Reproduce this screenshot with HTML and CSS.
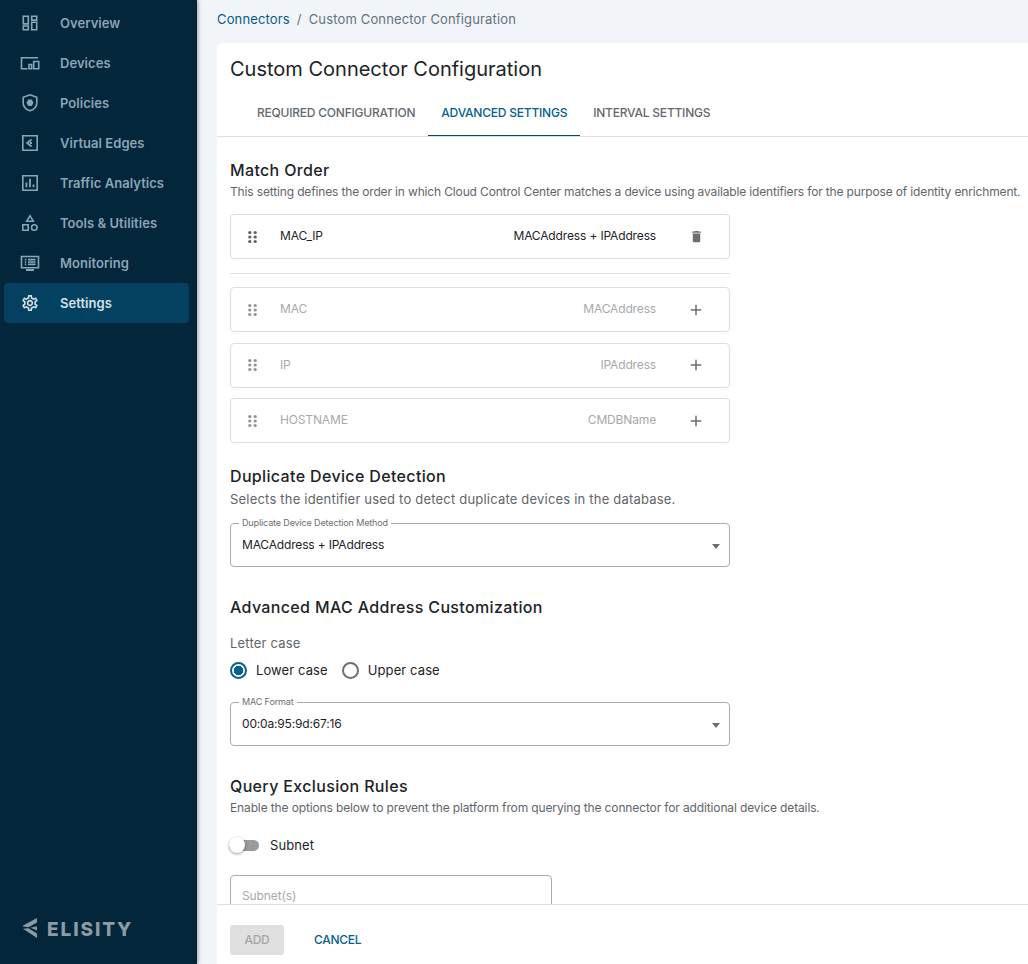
FILE: index.html
```html
<!DOCTYPE html>
<html lang="en">
<head>
  <meta charset="UTF-8">
  <title>Custom Connector Configuration</title>
  <link rel="stylesheet" href="styles.css">
</head>
<body>
  <div class="app">
    <aside class="sidebar">
      <nav class="nav">
        <a class="nav-item"><svg class="nav-icon" viewBox="0 0 22 22"><path d="M4.300 4.300h5v7.600h-5zM12.700 4.300h5v3.800h-5zM12.700 10.200h5v7.500h-5zM4.300 14h5v3.700h-5z"/></svg>Overview</a>
        <a class="nav-item"><svg class="nav-icon" viewBox="0 0 22 22"><path d="M19 5.800H2.500V16.800H8.500M14.700 9.500h5v7.300h-5zM10 12.500h2.600v4.300H10z"/></svg>Devices</a>
        <a class="nav-item"><svg class="nav-icon" viewBox="0 0 22 22"><path d="M11 2.800l6.800 2.400v6c0 3.500-2.600 6.200-6.800 7.600-4.200-1.400-6.800-4.100-6.800-7.600v-6z"/><path class="icon-solid" d="M9.300 7.500h3.400l1.800 3.200-1.800 3.200H9.300l-1.800-3.200z"/></svg>Policies</a>
        <a class="nav-item"><svg class="nav-icon" viewBox="0 0 22 22"><path d="M3.800 3.800h14.400v14.400H3.800z"/><path d="M12.500 7.500L8.200 11l4.300 3.500M13 11h-2" stroke-width="1.800"/></svg>Virtual Edges</a>
        <a class="nav-item"><svg class="nav-icon" viewBox="0 0 22 22"><path d="M3.800 3.800h14.400v14.400H3.800z"/><path d="M7.500 10.500v4.800M11 6.800v8.500M14.500 12.500v2.800" stroke-width="1.800"/></svg>Traffic Analytics</a>
        <a class="nav-item"><svg class="nav-icon" viewBox="0 0 22 22"><path d="M11 3.800l3.300 5.400H7.700zM3.800 12.800h5.400v5.400H3.800z"/><circle cx="15.300" cy="15.500" r="2.800"/></svg>Tools &amp; Utilities</a>
        <a class="nav-item"><svg class="nav-icon" viewBox="0 0 22 22"><path d="M2.500 4.500h17v11.200h-17z"/><path d="M5.800 7.600h1.500M9 7.600h7.500M5.800 10h1.500M9 10h7.500M5.800 12.400h1.500M9 12.400h7.500"/><path class="icon-solid" d="M7 17h8v2H7z"/></svg>Monitoring</a>
        <a class="nav-item active"><svg class="nav-icon" viewBox="0 0 22 22"><path class="icon-solid" transform="translate(1.400 1.400) scale(.8)" d="M19.430 12.980c.04-.32.07-.64.07-.98 0-.34-.03-.66-.07-.98l2.110-1.650c.19-.15.24-.42.12-.64l-2-3.460c-.09-.16-.26-.25-.44-.25-.06 0-.12.01-.17.03l-2.490 1c-.52-.4-1.080-.73-1.690-.98l-.38-2.650C14.460 2.180 14.250 2 14 2h-4c-.25 0-.46.18-.49.42l-.38 2.650c-.61.25-1.170.59-1.690.98l-2.490-1c-.06-.02-.12-.03-.18-.03-.17 0-.34.09-.43.25l-2 3.460c-.13.22-.07.49.12.64l2.110 1.650c-.04.32-.07.65-.07.98 0 .33.03.66.07.98l-2.110 1.650c-.19.15-.24.42-.12.64l2 3.460c.09.16.26.25.44.25.06 0 .12-.01.17-.03l2.490-1c.52.4 1.080.73 1.690.98l.38 2.650c.03.24.24.42.49.42h4c.25 0 .46-.18.49-.42l.38-2.650c.61-.25 1.170-.59 1.690-.98l2.490 1c.06.02.12.03.18.03.17 0 .34-.09.43-.25l2-3.460c.12-.22.07-.49-.12-.64l-2.110-1.650zm-1.980-1.710c.04.31.05.52.05.73 0 .21-.02.43-.05.73l-.14 1.130.89.7 1.080.84-.7 1.210-1.270-.51-1.040-.42-.9.68c-.43.32-.84.56-1.250.73l-1.060.43-.16 1.130-.2 1.350h-1.400l-.19-1.350-.16-1.130-1.060-.43c-.43-.18-.83-.41-1.230-.71l-.91-.7-1.060.43-1.270.51-.7-1.210 1.080-.84.89-.7-.14-1.130c-.03-.31-.05-.54-.05-.74s.02-.43.05-.73l.14-1.130-.89-.7-1.080-.84.7-1.210 1.270.51 1.040.42.9-.68c.43-.32.84-.56 1.250-.73l1.060-.43.16-1.130.2-1.350h1.390l.19 1.350.16 1.130 1.060.43c.43.18.83.41 1.230.71l.91.7 1.060-.43 1.270-.51.7 1.210-1.070.85-.89.7.14 1.130zM12 8c-2.210 0-4 1.790-4 4s1.790 4 4 4 4-1.790 4-4-1.790-4-4-4zm0 6c-1.100 0-2-.9-2-2s.9-2 2-2 2 .9 2 2-.9 2-2 2z"/></svg>Settings</a>
      </nav>
      <div class="logo">
        <svg class="logo-mark" viewBox="0 0 14 20"><path d="M14 0v4.500L5.500 9.300 0 8.600V7.600zM0 10.800l5.500-.6L14 15.500V20zM7.500 9.700L14 8.300v4.200z"/></svg>
        <span class="logo-text">ELISITY</span>
      </div>
    </aside>

    <main class="main">
      <div class="breadcrumb"><a>Connectors</a><span class="sep">/</span><span>Custom Connector Configuration</span></div>
      <div class="card">
        <div class="card-scroll">
          <h1 class="title">Custom Connector Configuration</h1>
          <div class="tabs">
            <div class="tab">REQUIRED CONFIGURATION</div>
            <div class="tab selected">ADVANCED SETTINGS</div>
            <div class="tab">INTERVAL SETTINGS</div>
          </div>

          <div class="content">
            <h2 class="section first">Match Order</h2>
            <p class="desc lead">This setting defines the order in which Cloud Control Center matches a device using available identifiers for the purpose of identity enrichment.</p>

            <div class="rows">
              <div class="row">
                <svg class="drag" viewBox="0 0 10 14"><circle cx="2" cy="2" r="1.800"/><circle cx="8" cy="2" r="1.800"/><circle cx="2" cy="7" r="1.800"/><circle cx="8" cy="7" r="1.800"/><circle cx="2" cy="12" r="1.800"/><circle cx="8" cy="12" r="1.800"/></svg>
                <span class="row-name">MAC_IP</span>
                <span class="row-value">MACAddress + IPAddress</span>
                <svg class="row-action trash" viewBox="0 0 24 24"><path class="solid" d="M6 19c0 1.100.9 2 2 2h8c1.100 0 2-.9 2-2V7H6zM19 4h-3.500l-1-1h-5l-1 1H5v2h14z"/></svg>
              </div>
              <hr class="rule">
              <div class="row off">
                <svg class="drag" viewBox="0 0 10 14"><circle cx="2" cy="2" r="1.800"/><circle cx="8" cy="2" r="1.800"/><circle cx="2" cy="7" r="1.800"/><circle cx="8" cy="7" r="1.800"/><circle cx="2" cy="12" r="1.800"/><circle cx="8" cy="12" r="1.800"/></svg>
                <span class="row-name">MAC</span>
                <span class="row-value">MACAddress</span>
                <svg class="row-action" viewBox="0 0 24 24"><path class="solid" d="M19 13h-6v6h-2v-6H5v-2h6V5h2v6h6z"/></svg>
              </div>
              <div class="row off">
                <svg class="drag" viewBox="0 0 10 14"><circle cx="2" cy="2" r="1.800"/><circle cx="8" cy="2" r="1.800"/><circle cx="2" cy="7" r="1.800"/><circle cx="8" cy="7" r="1.800"/><circle cx="2" cy="12" r="1.800"/><circle cx="8" cy="12" r="1.800"/></svg>
                <span class="row-name">IP</span>
                <span class="row-value">IPAddress</span>
                <svg class="row-action" viewBox="0 0 24 24"><path class="solid" d="M19 13h-6v6h-2v-6H5v-2h6V5h2v6h6z"/></svg>
              </div>
              <div class="row off">
                <svg class="drag" viewBox="0 0 10 14"><circle cx="2" cy="2" r="1.800"/><circle cx="8" cy="2" r="1.800"/><circle cx="2" cy="7" r="1.800"/><circle cx="8" cy="7" r="1.800"/><circle cx="2" cy="12" r="1.800"/><circle cx="8" cy="12" r="1.800"/></svg>
                <span class="row-name">HOSTNAME</span>
                <span class="row-value">CMDBName</span>
                <svg class="row-action" viewBox="0 0 24 24"><path class="solid" d="M19 13h-6v6h-2v-6H5v-2h6V5h2v6h6z"/></svg>
              </div>
            </div>

            <h2 class="section dup">Duplicate Device Detection</h2>
            <p class="desc wide">Selects the identifier used to detect duplicate devices in the database.</p>
            <fieldset class="select dup-select">
              <legend>Duplicate Device Detection Method</legend>
              <span>MACAddress + IPAddress</span>
              <i class="caret"></i>
            </fieldset>

            <h2 class="section mac">Advanced MAC Address Customization</h2>
            <div class="group-label">Letter case</div>
            <div class="radios">
              <label class="radio checked"><i></i>Lower case</label>
              <label class="radio"><i></i>Upper case</label>
            </div>
            <fieldset class="select">
              <legend>MAC Format</legend>
              <span>00:0a:95:9d:67:16</span>
              <i class="caret"></i>
            </fieldset>

            <h2 class="section query">Query Exclusion Rules</h2>
            <p class="desc">Enable the options below to prevent the platform from querying the connector for additional device details.</p>
            <div class="switch-line"><span class="switch"><i></i></span>Subnet</div>
            <div class="text-input">Subnet(s)</div>
          </div>
        </div>
        <div class="footer">
          <button class="btn-add">ADD</button>
          <button class="btn-cancel">CANCEL</button>
        </div>
      </div>
    </main>
  </div>
</body>
</html>
```
FILE: styles.css
```css
* {
  box-sizing: border-box;
}
html, body {
  margin: 0;
  height: 964px;
  overflow: hidden;
}
body {
  font-family: Inter, "Liberation Sans", sans-serif;
  font-size: 13px;
  background-color: #f1f5f9;
  color: #1d2327;
}
.app {
  display: flex;
  height: 964px;
}

/* sidebar */
.sidebar {
  width: 197px;
  flex: none;
  background-color: #03263b;
  box-shadow: 1px 0 4px rgba(0, 0, 0, 0.35);
  display: flex;
  flex-direction: column;
  padding: 3px 8px 0 4px;
}
.nav {
  display: flex;
  flex-direction: column;
}
.nav-item {
  display: flex;
  align-items: center;
  height: 40px;
  padding-left: 15px;
  border-radius: 4px;
  color: #8aa5b7;
  font-size: 13px;
  font-weight: 600;
  letter-spacing: 0.05px;
}
.nav-item.active {
  background-color: #04405f;
  color: #d5e0e7;
}
.nav-icon {
  width: 22px;
  height: 22px;
  margin-right: 19px;
  fill: none;
  stroke: currentColor;
  stroke-width: 1.6;
  flex: none;
}
.icon-solid {
  fill: currentColor;
  stroke: none;
}
.logo {
  margin-top: auto;
  height: 80px;
  display: flex;
  align-items: flex-start;
  padding: 34px 0 0 19px;
  color: #8c9ba6;
  font-size: 19px;
  font-weight: 800;
  letter-spacing: 1.9px;
  line-height: 22px;
}
.logo-text {
  padding-top: 1px;
}
.logo-mark {
  width: 14px;
  height: 20px;
  margin-right: 10px;
  fill: currentColor;
}

/* main area */
.main {
  flex: 1;
  min-width: 0;
  padding: 0 0 0 20px;
  display: flex;
  flex-direction: column;
}
.breadcrumb {
  height: 43px;
  padding-top: 11px;
  font-size: 13px;
  line-height: 16px;
  letter-spacing: 0.15px;
  color: #63727c;
}
.breadcrumb a {
  color: #0b5a85;
}
.sep {
  margin: 0 7px;
}
.card {
  flex: 1;
  min-height: 0;
  background-color: #fff;
  border-radius: 6px 0 0 0;
  display: flex;
  flex-direction: column;
}
.card-scroll {
  flex: 1;
  min-height: 0;
  overflow: hidden;
}
.title {
  margin: 0;
  padding: 13px 0 0 13px;
  font-size: 20px;
  line-height: 26px;
  font-weight: 400;
  color: #1d2327;
}
.tabs {
  display: flex;
  height: 47px;
  margin-top: 8px;
  padding-left: 27px;
  border-bottom: 1px solid #dfe1e3;
}
.tab {
  font-size: 12px;
  font-weight: 500;
  letter-spacing: -0.22px;
  color: #63696e;
  line-height: 46px;
  padding: 0 13px;
}
.tab.selected {
  color: #04608f;
  border-bottom: 1px solid #04496d;
  height: 46px;
}
.content {
  padding: 0 0 0 13px;
}
.section {
  margin: 0;
  font-size: 16px;
  line-height: 20px;
  font-weight: 500;
  letter-spacing: 0.35px;
  color: #1d2327;
}
.section.first {
  margin-top: 23px;
}
.desc {
  margin: 3px 0 0;
  font-size: 12px;
  line-height: 18px;
  letter-spacing: -0.13px;
  color: #5f6569;
  white-space: nowrap;
}
.desc.lead {
  letter-spacing: -0.15px;
}
.desc.wide {
  font-size: 13px;
  letter-spacing: 0.2px;
  margin-top: 4px;
}

/* match order rows */
.rows {
  width: 500px;
  margin-top: 13px;
  display: flex;
  flex-direction: column;
  gap: 10.5px;
}
.row {
  height: 45px;
  border: 1px solid #dcdfe1;
  border-radius: 4px;
  display: flex;
  align-items: center;
  padding: 0 24px 0 17px;
  font-size: 12px;
  letter-spacing: -0.15px;
  color: #1d2327;
}
.drag {
  width: 9px;
  height: 14px;
  fill: #5a5f63;
  margin-right: 23px;
  flex: none;
}
.row-name {
  flex: 1;
  padding-bottom: 2px;
}
.row-value {
  margin-right: 31px;
  padding-bottom: 2px;
}
.row-action {
  width: 18px;
  height: 18px;
  flex: none;
}
.row-action.trash {
  width: 15px;
  height: 15px;
  margin: 0 1.5px;
}
.solid {
  fill: #6b6f72;
}
.row.off {
  color: #a6a9ac;
}
.row.off .drag {
  fill: #8f9396;
}
.rule {
  width: 100%;
  margin: 3px 0;
  border: 0;
  border-top: 1px solid #dfe1e3;
}

/* selects */
.select {
  width: 500px;
  height: 50px;
  margin: 0;
  padding: 0 11px;
  border: 1px solid #a9adb0;
  border-radius: 4px;
  display: flex;
  align-items: center;
  font-size: 12px;
  letter-spacing: -0.17px;
}
.select legend {
  margin-left: -3px;
  padding: 0 3px 2px;
  font-size: 9px;
  line-height: 11px;
  letter-spacing: -0.13px;
  color: #6a6f73;
}
.select span {
  flex: 1;
  padding-bottom: 7px;
}
.caret {
  width: 0;
  height: 0;
  border-left: 4.5px solid transparent;
  border-right: 4.5px solid transparent;
  border-top: 5px solid #6b6f72;
  margin: 0 -1.5px 4px 0;
}
.dup-select {
  margin-top: 9px;
}
.section.dup {
  margin-top: 23px;
}
.section.mac {
  margin-top: 30px;
}
.section.query {
  margin-top: 30px;
}
.group-label {
  margin-top: 18px;
  font-size: 13px;
  line-height: 16px;
  letter-spacing: 0.2px;
  color: #5f6569;
}
.radios {
  display: flex;
  gap: 14px;
  margin: 9px 0 16px;
}
.radio {
  display: flex;
  align-items: center;
  font-size: 13px;
  line-height: 20px;
  letter-spacing: 0.1px;
  color: #1d2327;
}
.radio i {
  width: 17px;
  height: 17px;
  border: 2px solid #6b6f72;
  border-radius: 50%;
  margin-right: 9px;
  display: block;
}
.radio.checked i {
  border-color: #04608f;
  background: radial-gradient(circle, #04608f 0 4.5px, #fff 5px);
}

/* switch + input */
.switch-line {
  display: flex;
  align-items: center;
  margin-top: 18px;
  font-size: 13px;
  letter-spacing: 0.1px;
  line-height: 20px;
}
.switch {
  width: 30px;
  height: 11px;
  margin-right: 11px;
  border-radius: 6px;
  background-color: #9a9a9a;
  position: relative;
  margin-left: -1px;
}
.switch i {
  position: absolute;
  left: 0;
  top: -3px;
  width: 16px;
  height: 16px;
  border-radius: 50%;
  background-color: #fff;
  box-shadow: 0 1px 3px rgba(0, 0, 0, 0.4);
}
.text-input {
  width: 322px;
  height: 44px;
  margin-top: 20px;
  border: 1px solid #a9adb0;
  border-radius: 4px;
  padding: 13px 11px;
  font-size: 12px;
  line-height: 14px;
  letter-spacing: -0.1px;
  color: #a6a9ac;
}

/* footer */
.footer {
  height: 60px;
  flex: none;
  border-top: 1px solid #dfe1e3;
  padding: 20px 0 0 13px;
  display: flex;
  align-items: flex-start;
  background-color: #fff;
}
.footer button {
  font-family: inherit;
  font-size: 12px;
  font-weight: 500;
  letter-spacing: -0.3px;
  border: 0;
  border-radius: 3px;
  height: 30px;
  padding: 0 0 2px;
}
.btn-add {
  width: 54px;
  background-color: #e0e0e0;
  color: #a5a5a5;
}
.btn-cancel {
  margin-left: 30px;
  background: none;
  color: #04608f;
}
```
